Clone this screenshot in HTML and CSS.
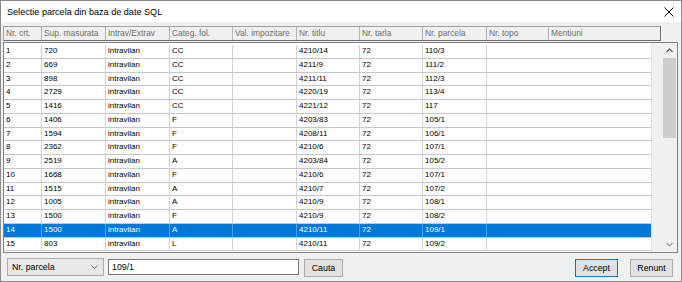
FILE: index.html
```html
<!DOCTYPE html>
<html lang="ro">
<head>
    <meta charset="UTF-8">
    <title>Selectie parcela din baza de date SQL</title>
    <link rel="stylesheet" href="styles.css">
</head>
<body>
    <div class="dialog">
        <div class="titlebar">
            <span class="title">Selectie parcela din baza de date SQL</span>
            <svg class="close" width="10" height="10" viewBox="0 0 10 10">
                <path d="M0.5 0.5 L9.5 9.5 M9.5 0.5 L0.5 9.5" stroke="#111" stroke-width="1" fill="none"/>
            </svg>
        </div>

        <div class="content">
            <div class="grid-header">
                <span>Nr. crt.</span>
                <span>Sup. masurata</span>
                <span>Intrav/Extrav</span>
                <span>Categ. fol.</span>
                <span>Val. impozitare</span>
                <span>Nr. titlu</span>
                <span>Nr. tarla</span>
                <span>Nr. parcela</span>
                <span>Nr. topo</span>
                <span>Mentiuni</span>
            </div>

            <div class="grid">
                <div class="rows">
                    <div class="row"><span>1</span><span>720</span><span>intravilan</span><span>CC</span><span></span><span>4210/14</span><span>72</span><span>110/3</span><span></span></div>
                    <div class="row"><span>2</span><span>669</span><span>intravilan</span><span>CC</span><span></span><span>4211/9</span><span>72</span><span>111/2</span><span></span></div>
                    <div class="row"><span>3</span><span>898</span><span>intravilan</span><span>CC</span><span></span><span>4211/11</span><span>72</span><span>112/3</span><span></span></div>
                    <div class="row"><span>4</span><span>2729</span><span>intravilan</span><span>CC</span><span></span><span>4220/19</span><span>72</span><span>113/4</span><span></span></div>
                    <div class="row"><span>5</span><span>1416</span><span>intravilan</span><span>CC</span><span></span><span>4221/12</span><span>72</span><span>117</span><span></span></div>
                    <div class="row"><span>6</span><span>1406</span><span>intravilan</span><span>F</span><span></span><span>4203/83</span><span>72</span><span>105/1</span><span></span></div>
                    <div class="row"><span>7</span><span>1594</span><span>intravilan</span><span>F</span><span></span><span>4208/11</span><span>72</span><span>106/1</span><span></span></div>
                    <div class="row"><span>8</span><span>2362</span><span>intravilan</span><span>F</span><span></span><span>4210/6</span><span>72</span><span>107/1</span><span></span></div>
                    <div class="row"><span>9</span><span>2519</span><span>intravilan</span><span>A</span><span></span><span>4203/84</span><span>72</span><span>105/2</span><span></span></div>
                    <div class="row"><span>10</span><span>1668</span><span>intravilan</span><span>F</span><span></span><span>4210/6</span><span>72</span><span>107/1</span><span></span></div>
                    <div class="row"><span>11</span><span>1515</span><span>intravilan</span><span>A</span><span></span><span>4210/7</span><span>72</span><span>107/2</span><span></span></div>
                    <div class="row"><span>12</span><span>1005</span><span>intravilan</span><span>A</span><span></span><span>4210/9</span><span>72</span><span>108/1</span><span></span></div>
                    <div class="row"><span>13</span><span>1500</span><span>intravilan</span><span>F</span><span></span><span>4210/9</span><span>72</span><span>108/2</span><span></span></div>
                    <div class="row selected"><span>14</span><span>1500</span><span>intravilan</span><span>A</span><span></span><span>4210/11</span><span>72</span><span>109/1</span><span></span></div>
                    <div class="row"><span>15</span><span>803</span><span>intravilan</span><span>L</span><span></span><span>4210/11</span><span>72</span><span>109/2</span><span></span></div>
                </div>

                <div class="scrollbar">
                    <div class="arrow">
                        <svg width="7" height="5" viewBox="0 0 7 5"><path d="M0.5 4 L3.5 1 L6.5 4" stroke="#555" stroke-width="1.2" fill="none"/></svg>
                    </div>
                    <div class="thumb"></div>
                    <div class="track"></div>
                    <div class="arrow">
                        <svg width="7" height="5" viewBox="0 0 7 5"><path d="M0.5 1 L3.5 4 L6.5 1" stroke="#999" stroke-width="1.2" fill="none"/></svg>
                    </div>
                </div>
            </div>
        </div>

        <div class="footer">
            <div class="combo">
                <span>Nr. parcela</span>
                <svg width="7" height="4" viewBox="0 0 7 4"><path d="M0.5 0.5 L3.5 3.5 L6.5 0.5" stroke="#666" stroke-width="1" fill="none"/></svg>
            </div>
            <div class="search-input">109/1</div>
            <button type="button" class="btn btn-search">Cauta</button>
            <button type="button" class="btn btn-default">Accept</button>
            <button type="button" class="btn">Renunt</button>
        </div>
    </div>
</body>
</html>
```

FILE: styles.css
```css
* {
    box-sizing: border-box;
}

body {
    margin: 0;
    font-family: "Liberation Sans", Arial, sans-serif;
    font-size: 8px;
    color: #000;
}

.dialog {
    width: 682px;
    height: 282px;
    border: 1px solid #8c8c8c;
    background-color: #f0f0f0;
    display: flex;
    flex-direction: column;
}

.titlebar {
    height: 21px;
    background-color: #fff;
    display: flex;
    align-items: center;
    justify-content: space-between;
    padding: 0 7px 0 6px;
}

.title {
    font-size: 9.1px;
}

.content {
    padding: 4px 3px 0 2px;
}

/* column header */
.grid-header {
    width: 658px;
    height: 15px;
    border: 1px solid #a0a0a0;
    border-right-color: #6e6e6e;
    border-bottom-color: #6e6e6e;
    display: grid;
    grid-template-columns: 38px 64px 64px 63px 64px 63px 63px 64px 62px 1fr;
}

.grid-header span {
    color: #6d6d6d;
    font-size: 8.4px;
    line-height: 13px;
    padding-left: 2px;
    border-right: 1px solid #b4b4b4;
    white-space: nowrap;
    overflow: hidden;
}

.grid-header span:last-child {
    border-right: none;
}

/* data grid */
.grid {
    width: 675px;
    height: 211px;
    margin-top: 1px;
    border: 1px solid #828282;
    display: flex;
}

.rows {
    width: 648px;
    padding-top: 2px;
    background-color: #fff;
    border-right: 1px solid #e0e0e0;
}

.row {
    display: grid;
    grid-template-columns: 38px 64px 64px 63px 64px 63px 63px 64px 1fr;
    height: 13.75px;
    border-bottom: 1px solid #c8c8c8;
}

.row span {
    padding-left: 2px;
    line-height: 12.75px;
    border-right: 1px solid #d4d4d4;
    white-space: nowrap;
    overflow: hidden;
}

.row span:last-child {
    border-right: none;
}

.row.selected {
    background-color: #0078d7;
    color: #fff;
}

.row.selected span {
    border-right-color: rgba(255, 255, 255, 0.3);
}

.scrollbar {
    margin-left: auto;
    width: 15px;
    display: flex;
    flex-direction: column;
}

.arrow {
    height: 15px;
    display: flex;
    align-items: center;
    justify-content: center;
}

.thumb {
    height: 80px;
    margin: 0 1px;
    background-color: #cdcdcd;
}

.track {
    flex: 1;
}

/* bottom bar */
.footer {
    display: flex;
    align-items: flex-start;
    padding: 5px 8px 0 6px;
}

.combo {
    width: 97px;
    height: 18px;
    border: 1px solid #acacac;
    background-color: #e8e8e8;
    display: flex;
    align-items: center;
    justify-content: space-between;
    padding: 0 5px 0 4px;
    font-size: 8.8px;
}

.search-input {
    width: 191px;
    height: 16px;
    margin: 1px 0 0 4px;
    border: 1px solid #7a7a7a;
    background-color: #fff;
    padding-left: 3px;
    font-size: 8.8px;
    line-height: 14px;
}

.btn {
    height: 18px;
    margin-top: 1px;
    padding: 0;
    border: 1px solid #adadad;
    background-color: #e1e1e1;
    font-family: "Liberation Sans", Arial, sans-serif;
    font-size: 8.8px;
    color: #000;
    width: 43px;
}

.btn-search {
    width: 39px;
    margin-left: 5px;
}

.btn-default {
    margin-left: auto;
    margin-right: 12px;
    border-color: #0078d7;
}
```
